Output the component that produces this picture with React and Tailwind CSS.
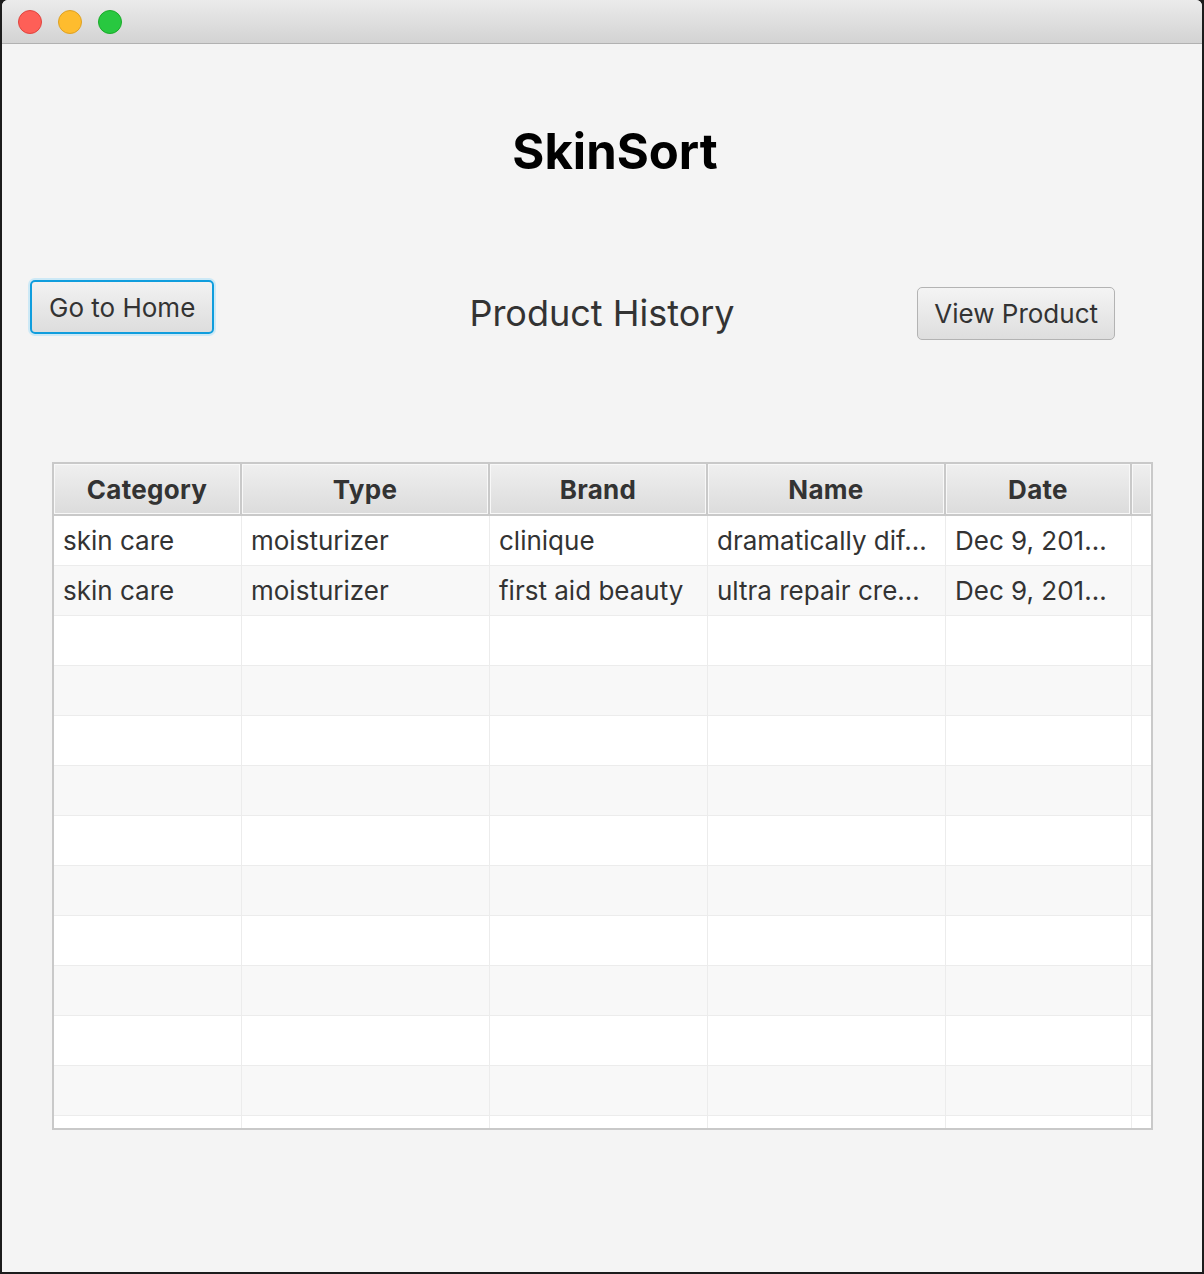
import React from 'react';

const columns = [
  { label: 'Category', w: 'w-[188px]', hw: 'w-[186px]' },
  { label: 'Type', w: 'w-[248px]', hw: 'w-[246px]' },
  { label: 'Brand', w: 'w-[218px]', hw: 'w-[216px]' },
  { label: 'Name', w: 'w-[238px]', hw: 'w-[236px]' },
  { label: 'Date', w: 'w-[186px]', hw: 'w-[184px]' },
];

const rows = [
  ['skin care', 'moisturizer', 'clinique', 'dramatically dif...', 'Dec 9, 201...'],
  ['skin care', 'moisturizer', 'first aid beauty', 'ultra repair cre...', 'Dec 9, 201...'],
];

const font = { fontFamily: 'Inter, "Liberation Sans", sans-serif' };

function TrafficLights() {
  return (
    <div className="flex items-center gap-[16px] pl-[16px]">
      <span className="w-[24px] h-[24px] rounded-full bg-[#fe5f57] border border-[#e0443e]" />
      <span className="w-[24px] h-[24px] rounded-full bg-[#febc2e] border border-[#dea123]" />
      <span className="w-[24px] h-[24px] rounded-full bg-[#28c840] border border-[#1aab29]" />
    </div>
  );
}

function Row({ cells, index }) {
  const bg = index % 2 === 0 ? 'bg-white' : 'bg-[#f8f8f8]';
  return (
    <div className={`flex h-[50px] border-b border-[#ececec] ${bg}`}>
      {columns.map((c, i) => (
        <div
          key={c.label}
          className={`${c.w} shrink-0 border-r border-[#ececec] flex items-center pl-[9px] text-[26px] text-[#333] whitespace-nowrap overflow-hidden`}
        >
          {cells ? cells[i] : ''}
        </div>
      ))}
      <div className="flex-1" />
    </div>
  );
}

export default function App() {
  const emptyRows = Array.from({ length: 11 });
  return (
    <div className="w-[1204px] h-[1274px] bg-[#1c1c1c] px-[2px] pb-[2px]" style={font}>
      <div className="h-full flex flex-col bg-[#f4f4f4] rounded-t-[6px] overflow-hidden">
        {/* Title bar */}
        <div className="h-[44px] shrink-0 flex items-center bg-gradient-to-b from-[#ebebeb] to-[#d3d3d3] border-b border-[#b1b1b1]">
          <TrafficLights />
        </div>

        {/* App title */}
        <div className="pt-[78px] flex justify-center pl-[26px]">
          <h1 className="text-[49px] font-bold text-black leading-[60px]">SkinSort</h1>
        </div>

        {/* Toolbar row */}
        <div className="mt-[98px] grid grid-cols-[1fr_auto_1fr] items-start">
          <div className="pl-[28px] flex">
            <button className="h-[54px] px-[17px] rounded-[5px] border-2 border-[#0f9ddd] shadow-[0_0_0_2px_#cde9f6] bg-gradient-to-b from-[#f2f2f2] to-[#dddddd] text-[26px] text-[#333]">
              Go to Home
            </button>
          </div>
          <div className="pt-[12px] text-[36px] text-[#333] leading-[42px]">Product History</div>
          <div className="flex justify-end pr-[87px] pt-[7px]">
            <button className="h-[53px] px-[16px] rounded-[5px] border border-[#b3b3b3] bg-gradient-to-b from-[#f4f4f4] to-[#dedede] text-[26px] text-[#333]">
              View Product
            </button>
          </div>
        </div>

        {/* Table */}
        <div className="mt-[122px] ml-[50px] w-[1101px] h-[668px] border-2 border-[#c9c9c9] bg-white overflow-hidden">
          <div className="flex h-[52px] border-b-2 border-[#c9c9c9] bg-[#c9c9c9] gap-[2px]">
            {columns.map((c) => (
              <div
                key={c.label}
                className={`${c.hw} shrink-0 flex items-center justify-center bg-gradient-to-b from-[#efefef] to-[#dcdcdc] border border-[#f8f8f8] text-[26px] font-bold text-[#333] tracking-[0.3px]`}
              >
                {c.label}
              </div>
            ))}
            <div className="flex-1 bg-gradient-to-b from-[#efefef] to-[#dcdcdc] border border-[#f8f8f8]" />
          </div>
          {rows.map((r, i) => (
            <Row key={i} cells={r} index={i} />
          ))}
          {emptyRows.map((_, i) => (
            <Row key={`e${i}`} index={i + 2} />
          ))}
        </div>
      </div>
    </div>
  );
}
